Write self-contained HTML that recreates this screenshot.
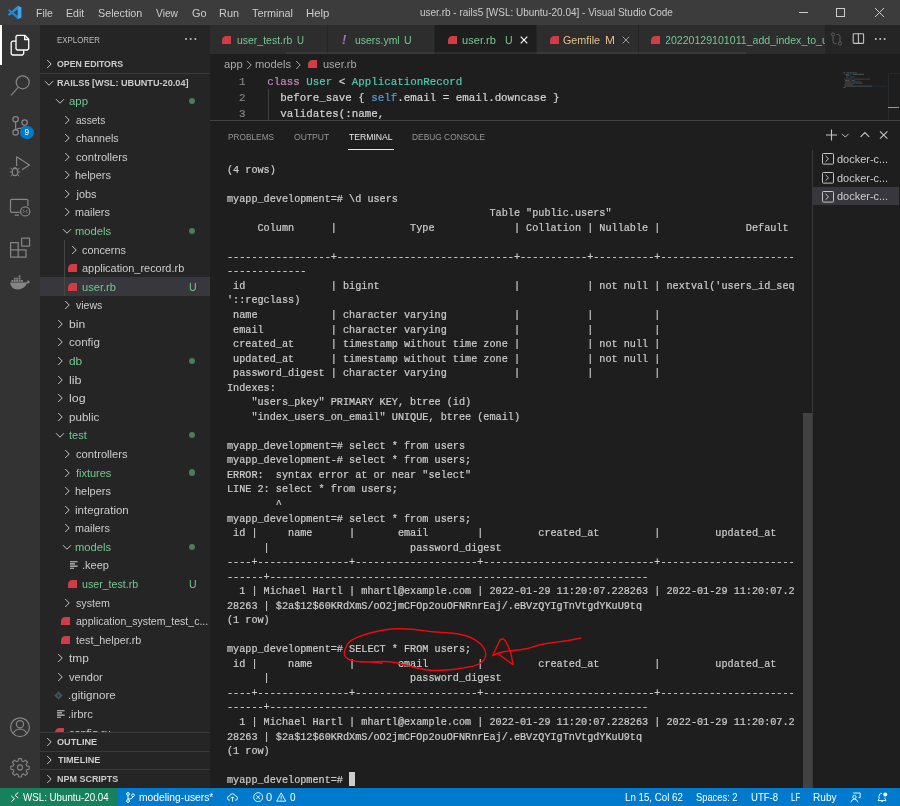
<!DOCTYPE html>
<html lang="en"><head><meta charset="utf-8"><title>user.rb - rails5 [WSL: Ubuntu-20.04] - Visual Studio Code</title>
<style>
*{box-sizing:border-box;margin:0;padding:0}
html,body{width:900px;height:806px;overflow:hidden;background:#1e1e1e}
body{font-family:"Liberation Sans",sans-serif;font-size:10.9px;color:#cccccc;position:relative}
.a{position:absolute}
.t{position:absolute;white-space:pre;transform-origin:0 50%}
.tl{position:absolute;left:227px;height:14.536px;line-height:14.536px;white-space:pre;font-family:"Liberation Mono",monospace;font-size:10.18px;color:#cccccc;-webkit-text-stroke:0.2px #cccccc}
.cl{position:absolute;white-space:pre;font-family:"Liberation Mono",monospace;font-size:10.83px;color:#d4d4d4;height:16px;line-height:16px;-webkit-text-stroke:0.2px}
</style></head><body>
<div id="root" style="position:absolute;left:0;top:0;width:900px;height:806px;will-change:transform">

<div class="a" style="left:0;top:0;width:900px;height:25px;background:#3c3c3c"></div>
<div class="a" style="left:0;top:25px;width:40px;height:763px;background:#333333"></div>
<div class="a" style="left:40px;top:25px;width:170px;height:763px;background:#252526"></div>
<div class="a" style="left:210px;top:25px;width:690px;height:29px;background:#252526"></div>
<svg class="a" style="left:0;top:0" width="30" height="25" viewBox="0 0 30 25"><path d="M7.900 14.3L9.300 15.700 17.800 9.200 17.800 5.700Z" fill="#1e93e0"/><path d="M9.300 9.200L7.900 10.600 17.800 19.200 17.800 15.700Z" fill="#1a86cf"/><path d="M17.700 5.700L21.400 7.300 21.400 17.600 17.700 19.200Z" fill="#38a6f3"/></svg>
<span class="t" style="left:35.73px;top:4.50px;font-size:10.9px;color:#cccccc;line-height:16px;transform:scaleX(0.965);">File</span>
<span class="t" style="left:65.73px;top:4.50px;font-size:10.9px;color:#cccccc;line-height:16px;transform:scaleX(0.967);">Edit</span>
<span class="t" style="left:97.91px;top:4.50px;font-size:10.9px;color:#cccccc;line-height:16px;transform:scaleX(0.990);">Selection</span>
<span class="t" style="left:155.95px;top:4.50px;font-size:10.9px;color:#cccccc;line-height:16px;transform:scaleX(0.940);">View</span>
<span class="t" style="left:191.85px;top:4.50px;font-size:10.9px;color:#cccccc;line-height:16px;transform:scaleX(1.005);">Go</span>
<span class="t" style="left:219.10px;top:4.50px;font-size:10.9px;color:#cccccc;line-height:16px;">Run</span>
<span class="t" style="left:252.16px;top:4.50px;font-size:10.9px;color:#cccccc;line-height:16px;transform:scaleX(0.995);">Terminal</span>
<span class="t" style="left:306.06px;top:4.50px;font-size:10.9px;color:#cccccc;line-height:16px;transform:scaleX(1.045);">Help</span>
<span class="t" style="left:420.35px;top:4.50px;font-size:10.2px;color:#cccccc;line-height:16px;transform:scaleX(0.980);">user.rb - rails5 [WSL: Ubuntu-20.04] - Visual Studio Code</span>
<svg class="a" style="left:795px;top:0" width="105" height="25" viewBox="0 0 105 25"><path d="M4 12.5h9" stroke="#ccc" stroke-width="1"/><rect x="41.5" y="8.5" width="8" height="8" fill="none" stroke="#ccc" stroke-width="1"/><path d="M80 8l9 9M89 8l-9 9" stroke="#ccc" stroke-width="1"/></svg>
<div class="a" style="left:0;top:25px;width:2px;height:40px;background:#fff"></div>
<svg class="a" style="left:0;top:25px" width="40" height="763" viewBox="0 25 40 763" fill="none" stroke="#858585" stroke-width="1.25" stroke-linejoin="round" stroke-linecap="butt">
<g stroke="#ffffff" stroke-width="1.3"><path d="M17.2 35.3h7.6l3.9 3.9v9.6l-1.2 1.2h-10.3l-1.2-1.2v-12.3z"/><path d="M24.6 35.5v4h4"/><path d="M16 41.2h-3.6l-1.2 1.2v11.4l1.2 1.2h10.1l1.2-1.2v-3.6"/></g>
<circle cx="22.7" cy="82.3" r="6.5"/><path d="M18.3 87.2l-7.2 8.2"/>
<circle cx="15.6" cy="119.2" r="2.700"/><circle cx="15.6" cy="132.4" r="2.700"/><circle cx="24.6" cy="122.6" r="2.700"/><path d="M15.6 121.900v7.800M24.6 125q-0.4 3.2-4.2 3.4h-1.4q-2.6 0.2-3.4 2"/>
<path d="M16.6 166v-9.2l12.8 8.200-7.400 4.800"/><ellipse cx="15" cy="172" rx="2.7" ry="3.6"/><path d="M12.4 169.6l-2-1.6M17.6 169.6l2-1.6M12.3 172h-2.6M17.7 172h2.6M12.6 174.4l-2 1.8M17.4 174.4l2 1.8M13.2 168.4q1.8-1.8 3.6 0" stroke-width="1"/>
<path d="M19.6 212.4h-8.2l-0.9-0.9v-11.2l0.9-0.9h15.6l0.9 0.9v5.6M14.6 215h4.4" /><circle cx="25.2" cy="211.4" r="4.6"/><path d="M22.8 209.8l1.6 1.6-1.6 1.6M27.6 209.8l-1.6 1.6 1.6 1.6" stroke-width="0.9"/>
<path d="M10.6 242.6h7.6v14.6h-7.6zM10.6 249.8h15.4M18.2 249.8h7.8v7.4h-7.8"/><rect x="21.6" y="238.2" width="8" height="8" rx="0.6"/>
<g stroke="none" fill="#858585"><path d="M10 282.6h15.4q2-0.2 2.4-2.4q1.6 0.6 2.2 2q-1.2 1.4-3.2 1.4q-2.2 5.8-9.2 5.8q-6.6 0-7.6-6.8z"/><rect x="11.4" y="280" width="1.9" height="1.9"/><rect x="13.8" y="280" width="1.9" height="1.9"/><rect x="16.2" y="280" width="1.9" height="1.9"/><rect x="18.6" y="280" width="1.9" height="1.9"/><rect x="21" y="280" width="1.9" height="1.9"/><rect x="13.8" y="277.7" width="1.9" height="1.9"/><rect x="16.2" y="277.7" width="1.9" height="1.9"/><rect x="18.6" y="277.7" width="1.9" height="1.9"/><rect x="18.6" y="275.4" width="1.9" height="1.9"/></g>
<circle cx="20" cy="727.2" r="9.4"/><circle cx="20" cy="724.2" r="3.6"/><path d="M13.4 733.8q1-4.6 6.6-4.8q5.600 0.200 6.600 4.800"/>
<g transform="translate(20 767.4) scale(0.9) translate(-20 -767.4)"><circle cx="20" cy="767.4" r="2.8"/>
<path d="M18.4 757.6h3.2l0.500 2.700 1.700 0.700 2.300-1.600 2.300 2.300-1.600 2.300 0.700 1.700 2.700 0.500v3.200l-2.700 0.500-0.700 1.700 1.600 2.300-2.300 2.300-2.300-1.600-1.700 0.700-0.500 2.700h-3.200l-0.500-2.700-1.700-0.700-2.300 1.600-2.300-2.300 1.600-2.300-0.700-1.700-2.700-0.500v-3.200l2.700-0.500 0.700-1.700-1.600-2.300 2.300-2.300 2.300 1.600 1.700-0.700z"/>
</svg>
<div class="a" style="left:20.2px;top:125.8px;width:13.4px;height:13.4px;border-radius:50%;background:#007acc"></div>
<span class="t" style="left:24.6px;top:124.5px;font-size:8.2px;line-height:16px;color:#fff">9</span>

<span class="t" style="left:56.95px;top:32.00px;font-size:9.2px;color:#bbbbbb;line-height:16px;transform:scaleX(0.859);">EXPLORER</span>
<svg class="a" style="left:184px;top:36px" width="14" height="6" viewBox="0 0 14 6"><circle cx="2" cy="3" r="1" fill="#c5c5c5"/><circle cx="6.7" cy="3" r="1" fill="#c5c5c5"/><circle cx="11.4" cy="3" r="1" fill="#c5c5c5"/></svg>
<svg class="a" style="left:44.30px;top:58.60px" width="10" height="10" viewBox="0 0 10 10"><path d="M3.2 1 L7.2 5 L3.2 9" fill="none" stroke="#c5c5c5" stroke-width="1"/></svg>
<span class="t" style="left:57.24px;top:55.60px;font-size:9.3px;color:#cccccc;line-height:16px;font-weight:bold;transform:scaleX(0.943);">OPEN EDITORS</span>
<div class="a" style="left:40px;top:73px;width:170px;height:1px;background:#3a3a3b"></div>
<svg class="a" style="left:44.30px;top:78.00px" width="10" height="10" viewBox="0 0 10 10"><path d="M1 3.2 L5 7.2 L9 3.2" fill="none" stroke="#c5c5c5" stroke-width="1"/></svg>
<span class="t" style="left:56.98px;top:75.00px;font-size:9.3px;color:#cccccc;line-height:16px;font-weight:bold;transform:scaleX(0.983);">RAILS5 [WSL: UBUNTU-20.04]</span>
<div class="a" style="left:40px;top:277.00px;width:170px;height:18.60px;background:#37373d"></div>
<svg class="a" style="left:55.00px;top:96.00px" width="10" height="10" viewBox="0 0 10 10"><path d="M1 3.2 L5 7.2 L9 3.2" fill="none" stroke="#c5c5c5" stroke-width="1"/></svg>
<span class="t" style="left:68.92px;top:93.00px;font-size:10.9px;color:#73c991;line-height:16px;transform:scaleX(1.043);">app</span>
<div class="a" style="left:189.30px;top:97.90px;width:6.2px;height:6.2px;border-radius:50%;background:#4b7c5d"></div>
<svg class="a" style="left:61.80px;top:114.58px" width="10" height="10" viewBox="0 0 10 10"><path d="M3.2 1 L7.2 5 L3.2 9" fill="none" stroke="#c5c5c5" stroke-width="1"/></svg>
<span class="t" style="left:75.77px;top:111.58px;font-size:10.9px;color:#cccccc;line-height:16px;transform:scaleX(0.927);">assets</span>
<svg class="a" style="left:61.80px;top:133.15px" width="10" height="10" viewBox="0 0 10 10"><path d="M3.2 1 L7.2 5 L3.2 9" fill="none" stroke="#c5c5c5" stroke-width="1"/></svg>
<span class="t" style="left:75.75px;top:130.15px;font-size:10.9px;color:#cccccc;line-height:16px;transform:scaleX(0.977);">channels</span>
<svg class="a" style="left:61.80px;top:151.73px" width="10" height="10" viewBox="0 0 10 10"><path d="M3.2 1 L7.2 5 L3.2 9" fill="none" stroke="#c5c5c5" stroke-width="1"/></svg>
<span class="t" style="left:75.72px;top:148.73px;font-size:10.9px;color:#cccccc;line-height:16px;transform:scaleX(1.028);">controllers</span>
<svg class="a" style="left:61.80px;top:170.30px" width="10" height="10" viewBox="0 0 10 10"><path d="M3.2 1 L7.2 5 L3.2 9" fill="none" stroke="#c5c5c5" stroke-width="1"/></svg>
<span class="t" style="left:75.45px;top:167.30px;font-size:10.9px;color:#cccccc;line-height:16px;transform:scaleX(1.006);">helpers</span>
<svg class="a" style="left:61.80px;top:188.88px" width="10" height="10" viewBox="0 0 10 10"><path d="M3.2 1 L7.2 5 L3.2 9" fill="none" stroke="#c5c5c5" stroke-width="1"/></svg>
<span class="t" style="left:76.47px;top:185.88px;font-size:10.9px;color:#cccccc;line-height:16px;">jobs</span>
<svg class="a" style="left:61.80px;top:207.46px" width="10" height="10" viewBox="0 0 10 10"><path d="M3.2 1 L7.2 5 L3.2 9" fill="none" stroke="#c5c5c5" stroke-width="1"/></svg>
<span class="t" style="left:75.48px;top:204.46px;font-size:10.9px;color:#cccccc;line-height:16px;transform:scaleX(0.994);">mailers</span>
<svg class="a" style="left:61.80px;top:226.03px" width="10" height="10" viewBox="0 0 10 10"><path d="M1 3.2 L5 7.2 L9 3.2" fill="none" stroke="#c5c5c5" stroke-width="1"/></svg>
<span class="t" style="left:75.46px;top:223.03px;font-size:10.9px;color:#73c991;line-height:16px;transform:scaleX(1.029);">models</span>
<div class="a" style="left:189.30px;top:227.93px;width:6.2px;height:6.2px;border-radius:50%;background:#4b7c5d"></div>
<svg class="a" style="left:68.60px;top:244.61px" width="10" height="10" viewBox="0 0 10 10"><path d="M3.2 1 L7.2 5 L3.2 9" fill="none" stroke="#c5c5c5" stroke-width="1"/></svg>
<span class="t" style="left:82.14px;top:241.61px;font-size:10.9px;color:#cccccc;line-height:16px;transform:scaleX(0.992);">concerns</span>
<svg class="a" style="left:68.20px;top:263.98px" width="9" height="8.2" viewBox="0 0 9 8.2"><path d="M0 8.2 L0 4.8 C0 1.8 1.8 0 4.4 0 L9 0 L9 8.2 Z" fill="#d13c45"/></svg>
<span class="t" style="left:82.13px;top:260.18px;font-size:10.9px;color:#cccccc;line-height:16px;transform:scaleX(1.005);">application_record.rb</span>
<svg class="a" style="left:68.20px;top:282.56px" width="9" height="8.2" viewBox="0 0 9 8.2"><path d="M0 8.2 L0 4.8 C0 1.8 1.8 0 4.4 0 L9 0 L9 8.2 Z" fill="#d13c45"/></svg>
<span class="t" style="left:81.88px;top:278.76px;font-size:10.9px;color:#73c991;line-height:16px;transform:scaleX(1.020);">user.rb</span>
<span class="t" style="left:189.18px;top:278.76px;font-size:10.9px;color:#73c991;line-height:16px;transform:scaleX(0.970);">U</span>
<svg class="a" style="left:61.80px;top:300.34px" width="10" height="10" viewBox="0 0 10 10"><path d="M3.2 1 L7.2 5 L3.2 9" fill="none" stroke="#c5c5c5" stroke-width="1"/></svg>
<span class="t" style="left:76.16px;top:297.34px;font-size:10.9px;color:#cccccc;line-height:16px;transform:scaleX(0.962);">views</span>
<svg class="a" style="left:55.00px;top:318.91px" width="10" height="10" viewBox="0 0 10 10"><path d="M3.2 1 L7.2 5 L3.2 9" fill="none" stroke="#c5c5c5" stroke-width="1"/></svg>
<span class="t" style="left:68.61px;top:315.91px;font-size:10.9px;color:#cccccc;line-height:16px;transform:scaleX(1.112);">bin</span>
<svg class="a" style="left:55.00px;top:337.49px" width="10" height="10" viewBox="0 0 10 10"><path d="M3.2 1 L7.2 5 L3.2 9" fill="none" stroke="#c5c5c5" stroke-width="1"/></svg>
<span class="t" style="left:68.91px;top:334.49px;font-size:10.9px;color:#cccccc;line-height:16px;transform:scaleX(1.060);">config</span>
<svg class="a" style="left:55.00px;top:356.06px" width="10" height="10" viewBox="0 0 10 10"><path d="M3.2 1 L7.2 5 L3.2 9" fill="none" stroke="#c5c5c5" stroke-width="1"/></svg>
<span class="t" style="left:68.90px;top:353.06px;font-size:10.9px;color:#73c991;line-height:16px;transform:scaleX(1.089);">db</span>
<div class="a" style="left:189.30px;top:357.96px;width:6.2px;height:6.2px;border-radius:50%;background:#4b7c5d"></div>
<svg class="a" style="left:55.00px;top:374.64px" width="10" height="10" viewBox="0 0 10 10"><path d="M3.2 1 L7.2 5 L3.2 9" fill="none" stroke="#c5c5c5" stroke-width="1"/></svg>
<span class="t" style="left:68.55px;top:371.64px;font-size:10.9px;color:#cccccc;line-height:16px;transform:scaleX(1.155);">lib</span>
<svg class="a" style="left:55.00px;top:393.22px" width="10" height="10" viewBox="0 0 10 10"><path d="M3.2 1 L7.2 5 L3.2 9" fill="none" stroke="#c5c5c5" stroke-width="1"/></svg>
<span class="t" style="left:68.56px;top:390.22px;font-size:10.9px;color:#cccccc;line-height:16px;transform:scaleX(1.144);">log</span>
<svg class="a" style="left:55.00px;top:411.79px" width="10" height="10" viewBox="0 0 10 10"><path d="M3.2 1 L7.2 5 L3.2 9" fill="none" stroke="#c5c5c5" stroke-width="1"/></svg>
<span class="t" style="left:68.65px;top:408.79px;font-size:10.9px;color:#cccccc;line-height:16px;transform:scaleX(1.063);">public</span>
<svg class="a" style="left:55.00px;top:430.37px" width="10" height="10" viewBox="0 0 10 10"><path d="M1 3.2 L5 7.2 L9 3.2" fill="none" stroke="#c5c5c5" stroke-width="1"/></svg>
<span class="t" style="left:69.23px;top:427.37px;font-size:10.9px;color:#73c991;line-height:16px;transform:scaleX(1.016);">test</span>
<div class="a" style="left:189.30px;top:432.27px;width:6.2px;height:6.2px;border-radius:50%;background:#4b7c5d"></div>
<svg class="a" style="left:61.80px;top:448.94px" width="10" height="10" viewBox="0 0 10 10"><path d="M3.2 1 L7.2 5 L3.2 9" fill="none" stroke="#c5c5c5" stroke-width="1"/></svg>
<span class="t" style="left:75.72px;top:445.94px;font-size:10.9px;color:#cccccc;line-height:16px;transform:scaleX(1.028);">controllers</span>
<svg class="a" style="left:61.80px;top:467.52px" width="10" height="10" viewBox="0 0 10 10"><path d="M3.2 1 L7.2 5 L3.2 9" fill="none" stroke="#c5c5c5" stroke-width="1"/></svg>
<span class="t" style="left:76.05px;top:464.52px;font-size:10.9px;color:#73c991;line-height:16px;transform:scaleX(1.006);">fixtures</span>
<div class="a" style="left:189.30px;top:469.42px;width:6.2px;height:6.2px;border-radius:50%;background:#4b7c5d"></div>
<svg class="a" style="left:61.80px;top:486.10px" width="10" height="10" viewBox="0 0 10 10"><path d="M3.2 1 L7.2 5 L3.2 9" fill="none" stroke="#c5c5c5" stroke-width="1"/></svg>
<span class="t" style="left:75.45px;top:483.10px;font-size:10.9px;color:#cccccc;line-height:16px;transform:scaleX(1.006);">helpers</span>
<svg class="a" style="left:61.80px;top:504.67px" width="10" height="10" viewBox="0 0 10 10"><path d="M3.2 1 L7.2 5 L3.2 9" fill="none" stroke="#c5c5c5" stroke-width="1"/></svg>
<span class="t" style="left:75.42px;top:501.67px;font-size:10.9px;color:#cccccc;line-height:16px;transform:scaleX(1.057);">integration</span>
<svg class="a" style="left:61.80px;top:523.25px" width="10" height="10" viewBox="0 0 10 10"><path d="M3.2 1 L7.2 5 L3.2 9" fill="none" stroke="#c5c5c5" stroke-width="1"/></svg>
<span class="t" style="left:75.48px;top:520.25px;font-size:10.9px;color:#cccccc;line-height:16px;transform:scaleX(0.994);">mailers</span>
<svg class="a" style="left:61.80px;top:541.82px" width="10" height="10" viewBox="0 0 10 10"><path d="M1 3.2 L5 7.2 L9 3.2" fill="none" stroke="#c5c5c5" stroke-width="1"/></svg>
<span class="t" style="left:75.46px;top:538.82px;font-size:10.9px;color:#73c991;line-height:16px;transform:scaleX(1.029);">models</span>
<div class="a" style="left:189.30px;top:543.72px;width:6.2px;height:6.2px;border-radius:50%;background:#4b7c5d"></div>
<svg class="a" style="left:70.20px;top:561.40px" width="8" height="8" viewBox="0 0 8 8"><path d="M0 0.7h7.6M0 2.9h5M0 5.1h7.6M0 7.3h4" stroke="#c5c5c5" stroke-width="1.1" fill="none"/></svg>
<span class="t" style="left:81.60px;top:557.40px;font-size:10.9px;color:#cccccc;line-height:16px;transform:scaleX(1.008);">.keep</span>
<svg class="a" style="left:68.20px;top:579.78px" width="9" height="8.2" viewBox="0 0 9 8.2"><path d="M0 8.2 L0 4.8 C0 1.8 1.8 0 4.4 0 L9 0 L9 8.2 Z" fill="#d13c45"/></svg>
<span class="t" style="left:81.91px;top:575.98px;font-size:10.9px;color:#73c991;line-height:16px;transform:scaleX(0.976);">user_test.rb</span>
<span class="t" style="left:189.18px;top:575.98px;font-size:10.9px;color:#73c991;line-height:16px;transform:scaleX(0.970);">U</span>
<svg class="a" style="left:61.80px;top:597.55px" width="10" height="10" viewBox="0 0 10 10"><path d="M3.2 1 L7.2 5 L3.2 9" fill="none" stroke="#c5c5c5" stroke-width="1"/></svg>
<span class="t" style="left:75.91px;top:594.55px;font-size:10.9px;color:#cccccc;line-height:16px;transform:scaleX(0.979);">system</span>
<svg class="a" style="left:61.40px;top:616.93px" width="9" height="8.2" viewBox="0 0 9 8.2"><path d="M0 8.2 L0 4.8 C0 1.8 1.8 0 4.4 0 L9 0 L9 8.2 Z" fill="#d13c45"/></svg>
<span class="t" style="left:75.75px;top:613.13px;font-size:10.9px;color:#cccccc;line-height:16px;transform:scaleX(0.966);">application_system_test_c...</span>
<svg class="a" style="left:61.40px;top:635.50px" width="9" height="8.2" viewBox="0 0 9 8.2"><path d="M0 8.2 L0 4.8 C0 1.8 1.8 0 4.4 0 L9 0 L9 8.2 Z" fill="#d13c45"/></svg>
<span class="t" style="left:76.04px;top:631.70px;font-size:10.9px;color:#cccccc;line-height:16px;transform:scaleX(0.990);">test_helper.rb</span>
<svg class="a" style="left:55.00px;top:653.28px" width="10" height="10" viewBox="0 0 10 10"><path d="M3.2 1 L7.2 5 L3.2 9" fill="none" stroke="#c5c5c5" stroke-width="1"/></svg>
<span class="t" style="left:69.22px;top:650.28px;font-size:10.9px;color:#cccccc;line-height:16px;transform:scaleX(1.094);">tmp</span>
<svg class="a" style="left:55.00px;top:671.86px" width="10" height="10" viewBox="0 0 10 10"><path d="M3.2 1 L7.2 5 L3.2 9" fill="none" stroke="#c5c5c5" stroke-width="1"/></svg>
<span class="t" style="left:69.36px;top:668.86px;font-size:10.9px;color:#cccccc;line-height:16px;transform:scaleX(1.015);">vendor</span>
<svg class="a" style="left:54.40px;top:690.93px" width="9" height="9" viewBox="0 0 10 10"><path d="M5 0.3 L9.7 5 L5 9.7 L0.3 5 Z" fill="#41535b"/><path d="M3.6 3.4l2.4 2.2M5 5v2" stroke="#252526" stroke-width="0.9" fill="none"/><circle cx="5" cy="5" r="0.9" fill="#252526"/></svg>
<span class="t" style="left:68.34px;top:687.43px;font-size:10.9px;color:#cccccc;line-height:16px;transform:scaleX(1.066);">.gitignore</span>
<svg class="a" style="left:56.60px;top:710.01px" width="8" height="8" viewBox="0 0 8 8"><path d="M0 0.7h7.6M0 2.9h5M0 5.1h7.6M0 7.3h4" stroke="#c5c5c5" stroke-width="1.1" fill="none"/></svg>
<span class="t" style="left:68.38px;top:706.01px;font-size:10.9px;color:#cccccc;line-height:16px;transform:scaleX(1.029);">.irbrc</span>
<svg class="a" style="left:54.60px;top:728.38px" width="9" height="8.2" viewBox="0 0 9 8.2"><path d="M0 8.2 L0 4.8 C0 1.8 1.8 0 4.4 0 L9 0 L9 8.2 Z" fill="#d13c45"/></svg>
<span class="t" style="left:68.94px;top:724.58px;font-size:10.9px;color:#cccccc;line-height:16px;">config.ru</span>
<div class="a" style="left:64.2px;top:240px;width:1px;height:55.6px;background:#454545"></div>
<div class="a" style="left:40px;top:732.30px;width:170px;height:55.70px;background:#252526;border-top:1px solid #3a3a3b"></div>
<svg class="a" style="left:44.30px;top:737.30px" width="10" height="10" viewBox="0 0 10 10"><path d="M3.2 1 L7.2 5 L3.2 9" fill="none" stroke="#c5c5c5" stroke-width="1"/></svg>
<span class="t" style="left:57.22px;top:734.30px;font-size:9.3px;color:#cccccc;line-height:16px;font-weight:bold;transform:scaleX(0.984);">OUTLINE</span>
<div class="a" style="left:40px;top:751.00px;width:170px;height:37.00px;background:#252526;border-top:1px solid #3a3a3b"></div>
<svg class="a" style="left:44.30px;top:755.40px" width="10" height="10" viewBox="0 0 10 10"><path d="M3.2 1 L7.2 5 L3.2 9" fill="none" stroke="#c5c5c5" stroke-width="1"/></svg>
<span class="t" style="left:57.50px;top:752.40px;font-size:9.3px;color:#cccccc;line-height:16px;font-weight:bold;transform:scaleX(0.976);">TIMELINE</span>
<div class="a" style="left:40px;top:769.30px;width:170px;height:18.70px;background:#252526;border-top:1px solid #3a3a3b"></div>
<svg class="a" style="left:44.30px;top:774.00px" width="10" height="10" viewBox="0 0 10 10"><path d="M3.2 1 L7.2 5 L3.2 9" fill="none" stroke="#c5c5c5" stroke-width="1"/></svg>
<span class="t" style="left:56.99px;top:771.00px;font-size:9.3px;color:#cccccc;line-height:16px;font-weight:bold;transform:scaleX(0.965);">NPM SCRIPTS</span>
<div class="a" style="left:210px;top:25px;width:117px;height:29px;background:#2d2d2d"></div>
<div class="a" style="left:328px;top:25px;width:106px;height:29px;background:#2d2d2d"></div>
<div class="a" style="left:435px;top:25px;width:101px;height:29px;background:#1e1e1e"></div>
<div class="a" style="left:537px;top:25px;width:101px;height:29px;background:#2d2d2d"></div>
<div class="a" style="left:639px;top:25px;width:185.5px;height:29px;background:#2d2d2d"></div>
<svg class="a" style="left:222.30px;top:35.80px" width="9" height="8.2" viewBox="0 0 9 8.2"><path d="M0 8.2 L0 4.8 C0 1.8 1.8 0 4.4 0 L9 0 L9 8.2 Z" fill="#d13c45"/></svg>
<span class="t" style="left:236.82px;top:32.00px;font-size:10.9px;color:#73c991;line-height:16px;transform:scaleX(0.961);">user_test.rb</span>
<span class="t" style="left:296.75px;top:32.00px;font-size:10.9px;color:#73c991;line-height:16px;transform:scaleX(0.889);">U</span>
<span class="t" style="left:342.10px;top:32.00px;font-size:12.5px;color:#a074c4;line-height:16px;font-weight:bold;transform:scaleX(1.038);font-style:italic;">!</span>
<span class="t" style="left:355.02px;top:32.00px;font-size:10.9px;color:#73c991;line-height:16px;transform:scaleX(0.958);">users.yml</span>
<span class="t" style="left:404.18px;top:32.00px;font-size:10.9px;color:#73c991;line-height:16px;transform:scaleX(0.970);">U</span>
<svg class="a" style="left:448.00px;top:35.80px" width="9" height="8.2" viewBox="0 0 9 8.2"><path d="M0 8.2 L0 4.8 C0 1.8 1.8 0 4.4 0 L9 0 L9 8.2 Z" fill="#d13c45"/></svg>
<span class="t" style="left:461.98px;top:32.00px;font-size:10.9px;color:#73c991;line-height:16px;transform:scaleX(1.020);">user.rb</span>
<span class="t" style="left:505.18px;top:32.00px;font-size:10.9px;color:#73c991;line-height:16px;transform:scaleX(0.970);">U</span>
<svg class="a" style="left:520.3px;top:36px" width="8" height="8" viewBox="0 0 8 8"><path d="M0.7 0.7L7.3 7.3M7.3 0.7L0.7 7.3" stroke="#ffffff" stroke-width="1.1"/></svg>
<svg class="a" style="left:549.90px;top:35.80px" width="9" height="8.2" viewBox="0 0 9 8.2"><path d="M0 8.2 L0 4.8 C0 1.8 1.8 0 4.4 0 L9 0 L9 8.2 Z" fill="#d13c45"/></svg>
<span class="t" style="left:563.46px;top:32.00px;font-size:10.9px;color:#e2c08d;line-height:16px;transform:scaleX(0.986);">Gemfile</span>
<span class="t" style="left:605.01px;top:32.00px;font-size:10.9px;color:#e2c08d;line-height:16px;transform:scaleX(1.097);">M</span>
<svg class="a" style="left:622px;top:36px" width="8" height="8" viewBox="0 0 8 8"><path d="M0.7 0.7L7.3 7.3M7.3 0.7L0.7 7.3" stroke="#a0a0a0" stroke-width="1"/></svg>
<svg class="a" style="left:651.00px;top:35.80px" width="9" height="8.2" viewBox="0 0 9 8.2"><path d="M0 8.2 L0 4.8 C0 1.8 1.8 0 4.4 0 L9 0 L9 8.2 Z" fill="#d13c45"/></svg>
<div class="a" style="left:666px;top:25px;width:158.5px;height:27px;overflow:hidden">
<span class="t" style="left:-0.53px;top:7.00px;font-size:10.9px;color:#73c991;line-height:16px;transform:scaleX(0.972);">20220129101011_add_index_to_users_email.rb</span>
</div>
<div class="a" style="left:286px;top:52px;width:460px;height:2px;background:rgba(121,121,121,0.17)"></div>
<svg class="a" style="left:829px;top:31.2px" width="62" height="16" viewBox="0 0 62 16"><g fill="none" stroke="#5c5c5c" stroke-width="1"><circle cx="4" cy="3.5" r="1.6"/><circle cx="11" cy="12.5" r="1.6"/><path d="M4 5.2v5.3q0 2 2 2h1.5M11 10.8V5.5q0-2-2-2H7.5"/></g><g fill="none" stroke="#c5c5c5" stroke-width="1.1"><rect x="24.2" y="2.8" width="10.4" height="9.6" rx="0.8"/><path d="M29.4 2.8v9.6"/></g><g fill="#c5c5c5"><circle cx="46.8" cy="8" r="1"/><circle cx="51.2" cy="8" r="1"/><circle cx="55.6" cy="8" r="1"/></g></svg>
<span class="t" style="left:223.53px;top:56.20px;font-size:10.9px;color:#a9a9a9;line-height:16px;transform:scaleX(1.025);">app</span>
<svg class="a" style="left:244.30px;top:59.60px" width="10" height="10" viewBox="0 0 10 10"><path d="M3.2 1 L7.2 5 L3.2 9" fill="none" stroke="#a9a9a9" stroke-width="1"/></svg>
<span class="t" style="left:255.26px;top:56.20px;font-size:10.9px;color:#a9a9a9;line-height:16px;transform:scaleX(1.029);">models</span>
<svg class="a" style="left:292.70px;top:59.60px" width="10" height="10" viewBox="0 0 10 10"><path d="M3.2 1 L7.2 5 L3.2 9" fill="none" stroke="#a9a9a9" stroke-width="1"/></svg>
<svg class="a" style="left:308.30px;top:59.80px" width="9" height="8.2" viewBox="0 0 9 8.2"><path d="M0 8.2 L0 4.8 C0 1.8 1.8 0 4.4 0 L9 0 L9 8.2 Z" fill="#d13c45"/></svg>
<span class="t" style="left:322.59px;top:56.20px;font-size:10.9px;color:#a9a9a9;line-height:16px;transform:scaleX(1.008);">user.rb</span>
<div class="a" style="left:210px;top:54px;width:690px;height:66px;overflow:hidden">
<span class="cl" style="left:29.0px;top:19.60px;color:#858585">1</span>
<span class="cl" style="left:57.2px;top:19.60px"><span style="color:#c586c0">class</span> <span style="color:#4ec9b0">User</span> &lt; <span style="color:#4ec9b0">ApplicationRecord</span></span>
<span class="cl" style="left:29.0px;top:35.60px;color:#858585">2</span>
<span class="cl" style="left:57.2px;top:35.60px">  before_save { <span style="color:#569cd6">self</span>.email = email.downcase }</span>
<span class="cl" style="left:29.0px;top:51.60px;color:#858585">3</span>
<span class="cl" style="left:57.2px;top:51.60px">  validates(:name,</span>
<div class="a" style="left:57.8px;top:35px;width:1px;height:40px;background:#404040"></div>
</div>
<svg class="a" style="left:840px;top:70px;opacity:.5" width="50" height="22" viewBox="840 70 50 22"><rect x="843.3" y="72.45" width="1.7" height="0.85" fill="#c586c0"/><rect x="846" y="72.45" width="11.0" height="0.85" fill="#3f9d8c"/><rect x="845" y="73.85" width="4.0" height="0.85" fill="#8a8a8a"/><rect x="850" y="73.85" width="1.5" height="0.85" fill="#4a7fae"/><rect x="853" y="73.85" width="11.0" height="0.85" fill="#a0a0a0"/><rect x="846" y="75.25" width="3.5" height="0.85" fill="#808080"/><rect x="846" y="76.65" width="2.5" height="0.85" fill="#808080"/><rect x="849.5" y="76.65" width="5.0" height="0.85" fill="#4a7fae"/><rect x="844" y="78.65" width="8.5" height="0.85" fill="#4a7fae"/><rect x="853.5" y="78.65" width="16.5" height="0.85" fill="#8a6a50"/><rect x="845" y="80.05" width="4.5" height="0.85" fill="#8a8a8a"/><rect x="851" y="80.05" width="4.0" height="0.85" fill="#4a7fae"/><rect x="845" y="81.45" width="6.0" height="0.85" fill="#8a8a8a"/><rect x="852" y="81.45" width="9.5" height="0.85" fill="#4a7fae"/><rect x="845" y="82.75" width="17.5" height="0.85" fill="#7a7a7a"/><rect x="844" y="84.45" width="9.0" height="0.85" fill="#8a8a8a"/><rect x="844" y="85.75" width="43.0" height="0.85" fill="#27405a"/><rect x="845" y="85.75" width="27.0" height="0.85" fill="#6f7f90"/><rect x="843.3" y="86.95" width="2.2" height="0.85" fill="#c586c0"/></svg>
<div class="a" style="left:888px;top:73px;width:12px;height:47px;border-left:1px solid #2a2a2a;border-top:1px solid #292929"></div>
<div class="a" style="left:888.3px;top:107px;width:11px;height:1.3px;background:#9a9a9a"></div>
<div class="a" style="left:210px;top:120px;width:690px;height:1px;background:#424242"></div>
<span class="t" style="left:228.32px;top:128.50px;font-size:9.0px;color:#969696;line-height:16px;transform:scaleX(0.921);">PROBLEMS</span>
<span class="t" style="left:293.59px;top:128.50px;font-size:9.0px;color:#969696;line-height:16px;transform:scaleX(0.954);">OUTPUT</span>
<span class="t" style="left:349.11px;top:128.50px;font-size:9.0px;color:#e7e7e7;line-height:16px;transform:scaleX(0.956);">TERMINAL</span>
<span class="t" style="left:412.01px;top:128.50px;font-size:9.0px;color:#969696;line-height:16px;transform:scaleX(0.930);">DEBUG CONSOLE</span>
<div class="a" style="left:347.5px;top:148.5px;width:46.5px;height:1px;background:#e7e7e7"></div>
<svg class="a" style="left:824px;top:127px" width="70" height="16" viewBox="0 0 70 16"><g fill="none" stroke="#c5c5c5" stroke-width="1.1"><path d="M2 8h11M7.5 2.5v11"/><path d="M18 6.8l3.3 3.3 3.3-3.3" stroke-width="1"/><path d="M36.6 9.8l4.3-4.3 4.3 4.3"/><path d="M56 4.3l7.4 7.4M63.4 4.3l-7.4 7.4"/></g></svg>
<span class="tl" style="top:163.63px">(4 rows)</span>
<span class="tl" style="top:192.70px">myapp_development=# \d users</span>
<span class="tl" style="top:207.24px">                                           Table "public.users"</span>
<span class="tl" style="top:221.78px">     Column      |            Type             | Collation | Nullable |              Default</span>
<span class="tl" style="top:250.85px">-----------------+-----------------------------+-----------+----------+----------------------</span>
<span class="tl" style="top:265.38px">-------------</span>
<span class="tl" style="top:279.92px"> id              | bigint                      |           | not null | nextval('users_id_seq</span>
<span class="tl" style="top:294.46px">'::regclass)</span>
<span class="tl" style="top:308.99px"> name            | character varying           |           |          | </span>
<span class="tl" style="top:323.53px"> email           | character varying           |           |          | </span>
<span class="tl" style="top:338.06px"> created_at      | timestamp without time zone |           | not null | </span>
<span class="tl" style="top:352.60px"> updated_at      | timestamp without time zone |           | not null | </span>
<span class="tl" style="top:367.14px"> password_digest | character varying           |           |          | </span>
<span class="tl" style="top:381.67px">Indexes:</span>
<span class="tl" style="top:396.21px">    "users_pkey" PRIMARY KEY, btree (id)</span>
<span class="tl" style="top:410.74px">    "index_users_on_email" UNIQUE, btree (email)</span>
<span class="tl" style="top:439.82px">myapp_development=# select * from users</span>
<span class="tl" style="top:454.35px">myapp_development-# select * from users;</span>
<span class="tl" style="top:468.89px">ERROR:  syntax error at or near "select"</span>
<span class="tl" style="top:483.42px">LINE 2: select * from users;</span>
<span class="tl" style="top:497.96px">        ^</span>
<span class="tl" style="top:512.50px">myapp_development=# select * from users;</span>
<span class="tl" style="top:527.03px"> id |     name      |       email        |         created_at         |         updated_at</span>
<span class="tl" style="top:541.57px">      |                       password_digest</span>
<span class="tl" style="top:556.10px">----+---------------+--------------------+----------------------------+----------------------</span>
<span class="tl" style="top:570.64px">------+--------------------------------------------------------------</span>
<span class="tl" style="top:585.18px">  1 | Michael Hartl | mhartl@example.com | 2022-01-29 11:20:07.228263 | 2022-01-29 11:20:07.2</span>
<span class="tl" style="top:599.71px">28263 | $2a$12$60KRdXmS/oO2jmCFOp2ouOFNRnrEaj/.eBVzQYIgTnVtgdYKuU9tq</span>
<span class="tl" style="top:614.25px">(1 row)</span>
<span class="tl" style="top:643.32px">myapp_development=# SELECT * FROM users;</span>
<span class="tl" style="top:657.86px"> id |     name      |       email        |         created_at         |         updated_at</span>
<span class="tl" style="top:672.39px">      |                       password_digest</span>
<span class="tl" style="top:686.93px">----+---------------+--------------------+----------------------------+----------------------</span>
<span class="tl" style="top:701.46px">------+--------------------------------------------------------------</span>
<span class="tl" style="top:716.00px">  1 | Michael Hartl | mhartl@example.com | 2022-01-29 11:20:07.228263 | 2022-01-29 11:20:07.2</span>
<span class="tl" style="top:730.54px">28263 | $2a$12$60KRdXmS/oO2jmCFOp2ouOFNRnrEaj/.eBVzQYIgTnVtgdYKuU9tq</span>
<span class="tl" style="top:745.07px">(1 row)</span>
<span class="tl" style="top:774.14px">myapp_development=# </span>
<div class="a" style="left:348.8px;top:771.9px;width:6.2px;height:14.1px;background:#cccccc"></div>
<div class="a" style="left:803.3px;top:413px;width:8.9px;height:375px;background:#424242"></div>
<div class="a" style="left:812px;top:149.5px;width:1px;height:638.5px;background:#393939"></div>
<div class="a" style="left:813px;top:187px;width:86px;height:18.3px;background:#37373d"></div>
<svg class="a" style="left:822px;top:153.40px" width="12" height="12" viewBox="0 0 12 12"><rect x="0.5" y="0.5" width="11" height="10.6" rx="0.8" fill="none" stroke="#c5c5c5" stroke-width="1"/><path d="M3.6 3l2.9 2.8-2.9 2.8" fill="none" stroke="#c5c5c5" stroke-width="1"/></svg>
<span class="t" style="left:837.13px;top:151.20px;font-size:10.9px;color:#cccccc;line-height:16px;transform:scaleX(1.006);">docker-c...</span>
<svg class="a" style="left:822px;top:171.95px" width="12" height="12" viewBox="0 0 12 12"><rect x="0.5" y="0.5" width="11" height="10.6" rx="0.8" fill="none" stroke="#c5c5c5" stroke-width="1"/><path d="M3.6 3l2.9 2.8-2.9 2.8" fill="none" stroke="#c5c5c5" stroke-width="1"/></svg>
<span class="t" style="left:837.13px;top:169.75px;font-size:10.9px;color:#cccccc;line-height:16px;transform:scaleX(1.006);">docker-c...</span>
<svg class="a" style="left:822px;top:190.50px" width="12" height="12" viewBox="0 0 12 12"><rect x="0.5" y="0.5" width="11" height="10.6" rx="0.8" fill="none" stroke="#c5c5c5" stroke-width="1"/><path d="M3.6 3l2.9 2.8-2.9 2.8" fill="none" stroke="#c5c5c5" stroke-width="1"/></svg>
<span class="t" style="left:837.13px;top:188.30px;font-size:10.9px;color:#cccccc;line-height:16px;transform:scaleX(1.006);">docker-c...</span>
<svg class="a" style="left:0;top:0" width="900" height="806" viewBox="0 0 900 806" fill="none" stroke="#ee0a0a" stroke-width="1.4" stroke-linecap="round" stroke-linejoin="round"><path d="M344.4 654.9C343.8 653.1 344.4 650.9 345.3 648.7C346.2 646.5 347.7 643.5 349.8 641.6C351.9 639.7 354.4 638.5 357.8 637.1C361.2 635.7 365.8 634.2 370.2 633.0C374.6 631.8 379.6 630.7 384.4 630.0C389.1 629.3 393.6 628.9 398.7 628.8C403.8 628.7 409.1 629.0 414.7 629.5C420.3 630.0 426.5 631.2 432.4 631.8C438.3 632.4 444.9 632.4 450.2 633.0C455.5 633.6 460.2 634.2 464.4 635.3C468.5 636.4 472.0 637.9 475.1 639.8C478.2 641.7 481.3 644.5 483.1 646.9C484.9 649.3 485.8 651.6 485.8 654.0C485.8 656.4 484.9 659.2 483.1 661.1C481.3 663.0 478.8 664.4 475.1 665.6C471.4 666.8 465.6 667.5 460.9 668.2C456.2 668.9 451.4 669.6 446.7 670.0C441.9 670.4 436.8 670.6 432.4 670.4C427.9 670.2 424.1 669.4 420.0 668.6C415.9 667.8 411.8 666.6 407.6 665.6C403.5 664.6 399.2 663.2 395.1 662.5C391.0 661.8 386.9 661.6 382.7 661.5C378.5 661.4 374.3 662.0 370.2 662.0C366.1 662.0 361.4 662.0 357.8 661.5C354.2 661.0 351.1 660.4 348.9 659.3C346.7 658.2 345.0 656.7 344.4 654.9"/><path d="M371 661.6L382 663.3"/><path d="M580.7 638.0C578.4 638.5 571.5 639.9 566.7 640.7C561.9 641.5 556.5 642.0 552.0 642.7C547.5 643.4 544.2 643.7 540.0 644.7C535.8 645.7 531.6 647.7 526.7 648.7C521.8 649.7 515.1 650.0 510.7 650.7C506.2 651.4 503.0 651.9 500.0 652.7C497.0 653.5 493.9 655.1 492.7 655.6"/><path d="M492.7 655.6L500 640Q502.7 637.6 505.3 640.7Q509.5 648 511.3 655.3L513.1 664.7L497.3 653.3"/></svg>
<div class="a" style="left:0;top:787.5px;width:900px;height:18.5px;background:#007acc"></div>
<div class="a" style="left:0;top:787.5px;width:117.7px;height:18.5px;background:#16825d"></div>
<svg class="a" style="left:10.5px;top:791.5px" width="8" height="10" viewBox="0 0 8 10"><path d="M0.3 4L3.5 6.8 0.3 9.600M7.300 0.5L4.1 3.3 7.300 6.1" fill="none" stroke="#fff" stroke-width="1"/></svg>
<span class="t" style="left:23.25px;top:789.80px;font-size:10.2px;color:#ffffff;line-height:16px;transform:scaleX(0.957);">WSL: Ubuntu-20.04</span>
<svg class="a" style="left:125.5px;top:791.5px" width="9" height="11" viewBox="0 0 9 11"><g fill="none" stroke="#fff" stroke-width="1"><circle cx="2" cy="2" r="1.4"/><circle cx="2" cy="9" r="1.4"/><circle cx="7" cy="3.3" r="1.4"/><path d="M2 3.4v4.2M7 4.7q0 2.3-5 2.6"/></g></svg>
<span class="t" style="left:138.92px;top:789.80px;font-size:10.2px;color:#ffffff;line-height:16px;transform:scaleX(1.010);">modeling-users*</span>
<svg class="a" style="left:227px;top:792px" width="11" height="10" viewBox="0 0 11 10"><path d="M3 8.2H2.6a2.1 2.1 0 0 1 0-4.2 3 3 0 0 1 5.8 0 2.1 2.1 0 0 1 0 4.2H8M5.5 9.5V5M3.8 6.5l1.7-1.7 1.7 1.7" fill="none" stroke="#fff" stroke-width="0.9"/></svg>
<svg class="a" style="left:252.5px;top:792px" width="10.4" height="10.4" viewBox="0 0 10.4 10.4"><circle cx="5.2" cy="5.2" r="4.5" fill="none" stroke="#fff" stroke-width="0.9"/><path d="M3.3 3.3l3.8 3.8M7.1 3.3L3.3 7.1" stroke="#fff" stroke-width="0.9"/></svg>
<span class="t" style="left:266.27px;top:789.80px;font-size:10.2px;color:#ffffff;line-height:16px;transform:scaleX(1.085);">0</span>
<svg class="a" style="left:276.3px;top:792px" width="10.4" height="10" viewBox="0 0 10.4 10"><path d="M5.2 0.9L9.7 9.2H0.7Z" fill="none" stroke="#fff" stroke-width="0.9"/><path d="M5.2 3.8v3M5.2 7.5v0.9" stroke="#fff" stroke-width="0.9"/></svg>
<span class="t" style="left:289.81px;top:789.80px;font-size:10.2px;color:#ffffff;line-height:16px;transform:scaleX(0.983);">0</span>
<span class="t" style="left:624.90px;top:789.80px;font-size:10.2px;color:#ffffff;line-height:16px;transform:scaleX(0.956);">Ln 15, Col 62</span>
<span class="t" style="left:696.28px;top:789.80px;font-size:10.2px;color:#ffffff;line-height:16px;transform:scaleX(0.917);">Spaces: 2</span>
<span class="t" style="left:750.66px;top:789.80px;font-size:10.2px;color:#ffffff;line-height:16px;transform:scaleX(0.940);">UTF-8</span>
<span class="t" style="left:790.74px;top:789.80px;font-size:10.2px;color:#ffffff;line-height:16px;transform:scaleX(0.779);">LF</span>
<span class="t" style="left:813.17px;top:789.80px;font-size:10.2px;color:#ffffff;line-height:16px;transform:scaleX(0.989);">Ruby</span>
<svg class="a" style="left:850px;top:792px" width="11" height="11" viewBox="0 0 11 11"><g fill="none" stroke="#fff" stroke-width="0.9"><path d="M3.2 1h7v4.6H8.6"/><circle cx="4.4" cy="5" r="1.7"/><path d="M1 10.2q0.4-3 3.4-3t3.4 3"/></g></svg>
<svg class="a" style="left:877px;top:791.5px" width="11" height="11" viewBox="0 0 11 11"><path d="M5 1.2a3 3 0 0 0-3 3v2.6L1 8.6h8L8 6.8V5.5M4 8.8a1.1 1.1 0 0 0 2 0" fill="none" stroke="#fff" stroke-width="0.9"/><circle cx="8.2" cy="2.6" r="2" fill="#fff"/></svg>
</div></body></html>
